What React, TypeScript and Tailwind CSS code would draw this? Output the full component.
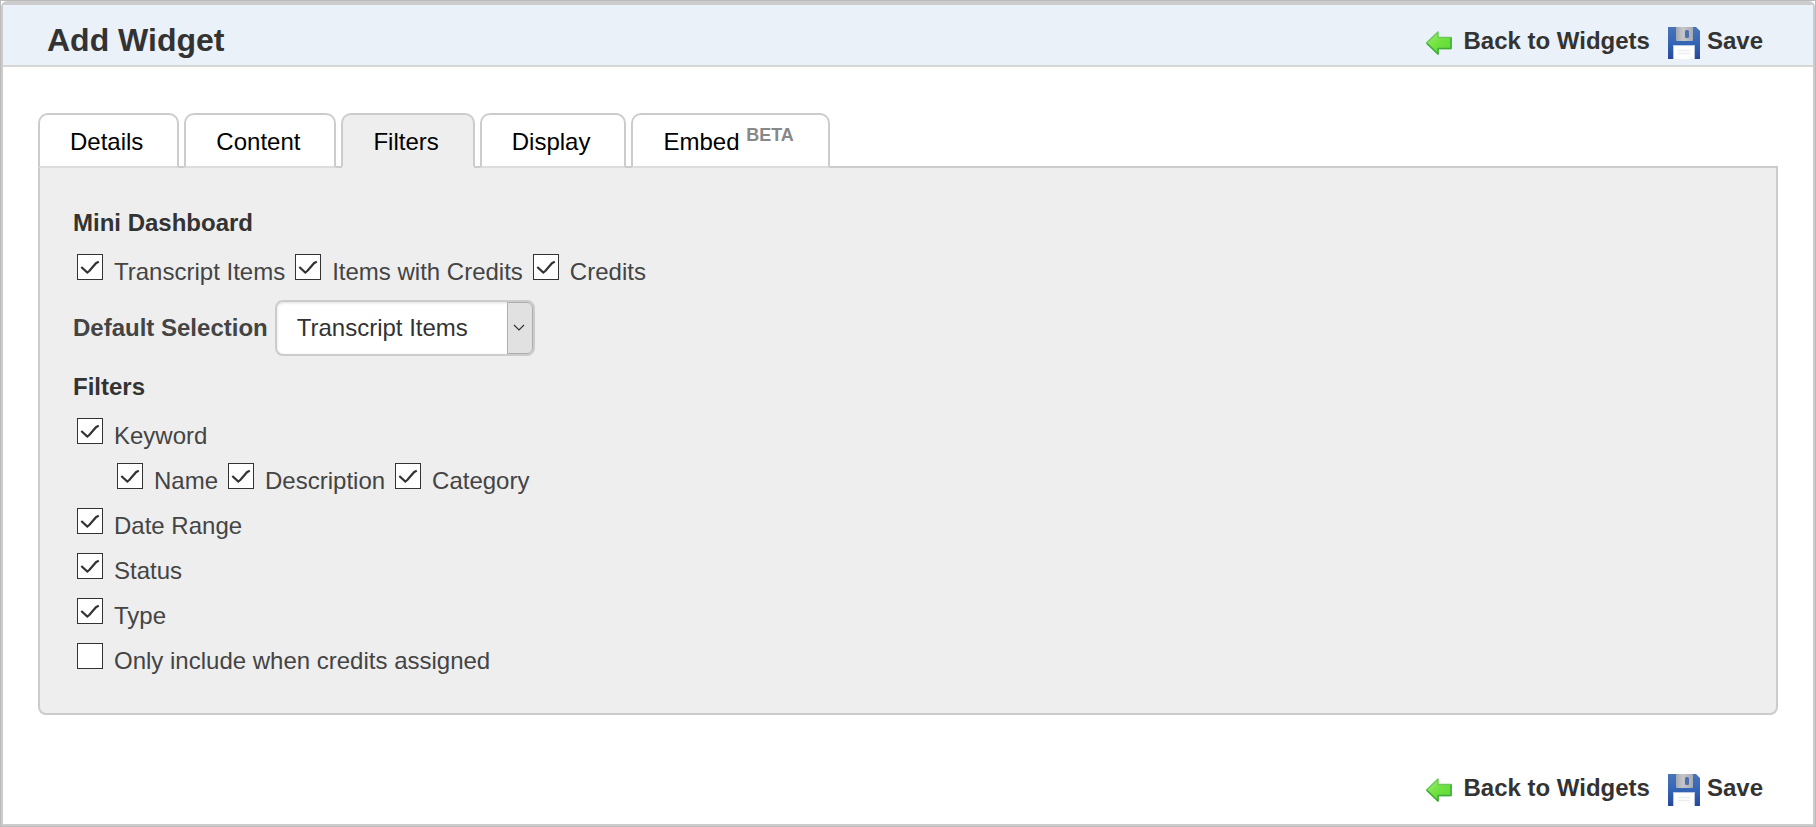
import { useState } from "react";
import type { ReactNode } from "react";

const tabs = ["Details", "Content", "Filters", "Display", "Embed"];

interface CheckProps {
  label: string;
  defaultChecked?: boolean;
}

function Check({ label, defaultChecked = true }: CheckProps) {
  return (
    <label className="flex items-baseline gap-[11px]">
      <span className="relative size-[26px] shrink-0">
        <input
          type="checkbox"
          defaultChecked={defaultChecked}
          className="peer block size-[26px] appearance-none border border-[#333] bg-white"
        />
        <svg
          viewBox="0 0 26 26"
          className="pointer-events-none absolute inset-0 hidden size-[26px] peer-checked:block"
          fill="none"
          stroke="#333"
          strokeWidth="2.2"
        >
          <path d="M4.3 13 L10.3 18.5 L12.5 16.8 L19 9.2 L21.8 7.6" />
        </svg>
      </span>
      {label}
    </label>
  );
}

function CheckRow({ children, indent }: { children: ReactNode; indent?: boolean }) {
  return (
    <div className={indent ? "flex flex-wrap gap-2.5 pl-11" : "flex flex-wrap gap-2.5 pl-1"}>
      {children}
    </div>
  );
}

function ArrowIcon() {
  return (
    <svg viewBox="0 0 32 32" className="size-8">
      <defs>
        <linearGradient id="arrow" x1="0" y1="0" x2="1" y2="1">
          <stop offset="0" stopColor="#a5ec7c" />
          <stop offset="0.5" stopColor="#6fe23c" />
          <stop offset="1" stopColor="#5fd838" />
        </linearGradient>
      </defs>
      <path
        d="M3.5 16 L15 5 V10.5 H28 V21.5 H15 V27 Z"
        fill="url(#arrow)"
        stroke="#6cc95c"
        strokeWidth="1.5"
        strokeLinejoin="round"
      />
      <path
        d="M4 16.5 L15 27 V21.5 H28 V10.5"
        fill="none"
        stroke="#3fae36"
        strokeWidth="1.5"
        strokeLinejoin="round"
      />
    </svg>
  );
}

function DiskIcon() {
  return (
    <svg viewBox="0 0 32 32" className="size-8">
      <defs>
        <linearGradient id="disk" x1="0" y1="0" x2="0" y2="1">
          <stop offset="0" stopColor="#4a74b8" />
          <stop offset="0.5" stopColor="#3465b5" />
          <stop offset="1" stopColor="#27489a" />
        </linearGradient>
        <linearGradient id="shutter" x1="0" y1="0" x2="1" y2="0">
          <stop offset="0" stopColor="#a4a8b0" />
          <stop offset="0.4" stopColor="#c6c7c9" />
          <stop offset="1" stopColor="#a6abb4" />
        </linearGradient>
      </defs>
      <path d="M0 0 H28 L32 4 V32 H0 Z" fill="url(#disk)" />
      <rect x="8" y="0" width="17" height="14" rx="1" fill="url(#shutter)" />
      <rect x="17" y="3" width="4" height="8" rx="1.5" fill="#4f70ad" />
      <rect x="5" y="18" width="22" height="14" fill="#b9c8e4" />
      <rect x="6" y="19" width="20" height="13" fill="#fff" />
      <path d="M10 23.5 H22 M10 26.5 H22" stroke="#eee" strokeWidth="1.5" />
    </svg>
  );
}

function Actions() {
  return (
    <div className="flex items-start gap-[18px] font-bold leading-7 text-[#333]">
      <a href="#" className="flex items-start gap-2">
        <ArrowIcon />
        Back to Widgets
      </a>
      <button type="button" className="flex items-start gap-[7px]">
        <DiskIcon />
        Save
      </button>
    </div>
  );
}

export default function App() {
  const [active, setActive] = useState("Filters");

  return (
    <div className="min-h-screen border border-[#bbb] bg-white font-['Liberation_Sans',Arial,sans-serif] text-2xl text-[#444]">
      <div className="flex min-h-[calc(100vh-2px)] flex-col rounded-t-md border-2 border-t-4 border-[#ccc]">
        <header className="flex items-start justify-between border-b-2 border-[#d6d6d6] bg-[#eaf1f9] pt-[15px] pr-[50px] pb-[5px] pl-11">
          <h1 className="text-[32px] leading-10 font-bold text-[#333]">Add Widget</h1>
          <div className="mt-[7px]">
            <Actions />
          </div>
        </header>

        <main className="px-[35px] pt-[46px]">
          <nav className="relative -mb-0.5 flex gap-[5px]">
            {tabs.map((tab) => (
              <button
                key={tab}
                type="button"
                onClick={() => setActive(tab)}
                className={
                  tab === active
                    ? "rounded-t-[10px] border-2 border-[#ccc] border-b-[#eee] bg-[#eee] pt-[9px] pr-[34px] pb-1.5 pl-[30px] leading-9 text-black"
                    : "rounded-t-[10px] border-2 border-[#ccc] border-b-[#ddd] bg-white pt-[9px] pr-[34px] pb-1.5 pl-[30px] leading-9 text-black"
                }
              >
                {tab}
                {tab === "Embed" && (
                  <>
                    {" "}
                    <sup className="-top-[9px] text-lg leading-none font-bold text-[#888]">BETA</sup>
                  </>
                )}
              </button>
            ))}
          </nav>

          <section className="rounded-b-lg border-2 border-[#ccc] bg-[#eee] px-[33px] pt-8 pb-[30px] leading-[45px]">
            <h2 className="mb-1 font-bold text-[#333]">Mini Dashboard</h2>
            <CheckRow>
              <Check label="Transcript Items" />
              <Check label="Items with Credits" />
              <Check label="Credits" />
            </CheckRow>

            <div className="mt-1.5 mb-2 flex items-center gap-[7px]">
              <label htmlFor="selection" className="pb-0.5 font-bold">
                Default Selection
              </label>
              <div className="relative">
                <select
                  id="selection"
                  className="block h-14 w-[260px] appearance-none rounded-lg border-2 border-[#ccc] bg-white pr-8 pb-0.5 pl-5 text-[#333] shadow-[inset_0_1px_3px_#ddd]"
                >
                  <option>Transcript Items</option>
                  <option>Items with Credits</option>
                  <option>Credits</option>
                </select>
                <span className="pointer-events-none absolute inset-y-0.5 right-0.5 flex w-[26px] items-center justify-center rounded-r-md border border-[#adadad] bg-[#e1e1e1] pr-0.5">
                  <svg viewBox="0 0 12 8" className="h-2 w-3" fill="none" stroke="#333" strokeWidth="1.2">
                    <path d="M1 1 L6 6 L11 1" />
                  </svg>
                </span>
              </div>
            </div>

            <h2 className="mb-1 font-bold text-[#333]">Filters</h2>
            <CheckRow>
              <Check label="Keyword" />
            </CheckRow>
            <CheckRow indent>
              <Check label="Name" />
              <Check label="Description" />
              <Check label="Category" />
            </CheckRow>
            <CheckRow>
              <Check label="Date Range" />
            </CheckRow>
            <CheckRow>
              <Check label="Status" />
            </CheckRow>
            <CheckRow>
              <Check label="Type" />
            </CheckRow>
            <CheckRow>
              <Check label="Only include when credits assigned" defaultChecked={false} />
            </CheckRow>
          </section>
        </main>

        <footer className="flex justify-end pt-[59px] pr-[50px] pb-[18px]">
          <Actions />
        </footer>
      </div>
    </div>
  );
}
